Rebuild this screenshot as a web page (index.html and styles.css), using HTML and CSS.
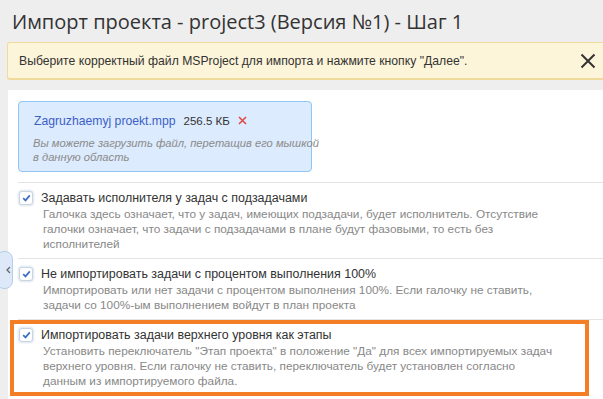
FILE: index.html
```html
<!DOCTYPE html>
<html lang="ru">
<head>
<meta charset="utf-8">
<link rel="stylesheet" href="styles.css">
</head>
<body>
<div class="page">
  <h1 class="title">Импорт проекта - project3 (Версия №1) - Шаг 1</h1>
  <div class="alert">
    <span class="alert-text">Выберите корректный файл MSProject для импорта и нажмите кнопку "Далее".</span>
    <svg class="alert-close" width="16" height="16" viewBox="0 0 16 16"><path d="M1.5 1.5L14.5 14.5M14.5 1.5L1.5 14.5" stroke="#333" stroke-width="2" fill="none"/></svg>
  </div>
  <div class="panel">
    <div class="side-tab"><svg width="5" height="8" viewBox="0 0 5 8"><path d="M4 1L1 4L4 7" stroke="#666" stroke-width="1.3" fill="none"/></svg></div>
    <div class="upload">
      <div class="file">
        <span class="file-name">Zagruzhaemyj proekt.mpp</span>
        <span class="file-size">256.5 КБ</span>
        <svg class="file-remove" width="9" height="9" viewBox="0 0 9 9"><path d="M1 1L8 8M8 1L1 8" stroke="#e0463f" stroke-width="1.5" fill="none"/></svg>
      </div>
      <div class="hint">Вы можете загрузить файл, перетащив его мышкой<br>в данную область</div>
    </div>
    <div class="option">
      <div class="option-head">
        <span class="check"><svg width="9" height="8" viewBox="0 0 9 8"><path d="M1.2 4.2L3.5 6.4L7.8 1.4" stroke="#3a6fc6" stroke-width="1.7" fill="none"/></svg></span>
        <span class="option-label">Задавать исполнителя у задач с подзадачами</span>
      </div>
      <div class="option-desc">Галочка здесь означает, что у задач, имеющих подзадачи, будет исполнитель. Отсутствие<br>галочки означает, что задачи с подзадачами в плане будут фазовыми, то есть без<br>исполнителей</div>
    </div>
    <div class="option">
      <div class="option-head">
        <span class="check"><svg width="9" height="8" viewBox="0 0 9 8"><path d="M1.2 4.2L3.5 6.4L7.8 1.4" stroke="#3a6fc6" stroke-width="1.7" fill="none"/></svg></span>
        <span class="option-label">Не импортировать задачи с процентом выполнения 100%</span>
      </div>
      <div class="option-desc">Импортировать или нет задачи с процентом выполнения 100%. Если галочку не ставить,<br>задачи со 100%-ым выполнением войдут в план проекта</div>
    </div>
    <div class="option option-highlight">
      <div class="option-head">
        <span class="check"><svg width="9" height="8" viewBox="0 0 9 8"><path d="M1.2 4.2L3.5 6.4L7.8 1.4" stroke="#3a6fc6" stroke-width="1.7" fill="none"/></svg></span>
        <span class="option-label">Импортировать задачи верхнего уровня как этапы</span>
      </div>
      <div class="option-desc">Установить переключатель "Этап проекта" в положение "Да" для всех импортируемых задач<br>верхнего уровня. Если галочку не ставить, переключатель будет установлен согласно<br>данным из импортируемого файла.</div>
    </div>
  </div>
</div>
</body>
</html>
```

FILE: styles.css
```css
html, body {
  margin: 0;
  padding: 0;
  background: #eeeeee;
  overflow: hidden;
}
body {
  font-family: "Liberation Sans", Arial, sans-serif;
  color: #333;
}
.page {
  width: 620px;
  padding: 0 0 0 8px;
}
.title {
  margin: 0;
  padding: 8px 0 0 4px;
  height: 34px;
  font-family: "Open Sans", sans-serif;
  font-weight: 400;
  font-size: 20px;
  line-height: 27px;
  color: #333;
}
.alert {
  display: flex;
  align-items: center;
  height: 35px;
  margin-left: -1px;
  padding: 0 0 0 11px;
  background: #fdf5d9;
  border: 1px solid #efdb9c;
  border-bottom-width: 2px;
  border-radius: 3px;
  font-size: 12.2px;
}
.alert-text {
  flex: 1;
}
.alert-close {
  margin-right: 31px;
}
.panel {
  position: relative;
  margin-top: 10px;
  background: #fff;
  padding: 11px 0 0 10px;
  height: 320px;
}
.side-tab {
  position: absolute;
  left: -12px;
  top: 161px;
  width: 17px;
  height: 38px;
  border: 1px solid #b5cdec;
  border-radius: 8px;
  background: #dde9f8;
  display: flex;
  align-items: center;
  justify-content: flex-end;
  padding-right: 1px;
  box-sizing: border-box;
}
.upload {
  width: 294px;
  box-sizing: border-box;
  background: #dcebfd;
  border: 1px solid #90c5f4;
  border-radius: 4px;
  padding: 10px 2px 7px 14px;
  margin-bottom: 10px;
}
.file {
  display: flex;
  align-items: center;
  height: 17px;
  margin-left: 1px;
}
.file-name {
  font-size: 12.2px;
  color: #3d5ec7;
}
.file-size {
  font-size: 11.5px;
  color: #333;
  margin-left: 8px;
}
.file-remove {
  margin-left: 8px;
}
.hint {
  margin-top: 7px;
  font-size: 11.2px;
  font-style: italic;
  line-height: 14px;
  color: #8a8a8a;
  white-space: nowrap;
}
.option {
  position: relative;
  border-top: 1px solid #e4e4e4;
  padding: 6px 0 6px 0;
  width: 585px;
}
.option-head {
  display: flex;
  align-items: center;
  height: 18px;
}
.check {
  width: 14px;
  height: 14px;
  margin-left: 1px;
  box-sizing: border-box;
  border: 1px solid #c9d4e3;
  border-radius: 3px;
  background: #fff;
  box-shadow: 0 0 0 1.5px #e9eef5;
  display: flex;
  align-items: center;
  justify-content: center;
}
.option-label {
  margin-left: 8px;
  font-size: 12.45px;
  color: #333;
}
.option-desc {
  padding-left: 25px;
  padding-right: 4px;
  font-size: 11.8px;
  line-height: 15px;
  color: #888;
  white-space: nowrap;
}
.option-highlight::after {
  content: "";
  position: absolute;
  top: 0;
  left: -8px;
  right: 14px;
  bottom: -1px;
  border: 4px solid #f47e25;
  pointer-events: none;
}
```
